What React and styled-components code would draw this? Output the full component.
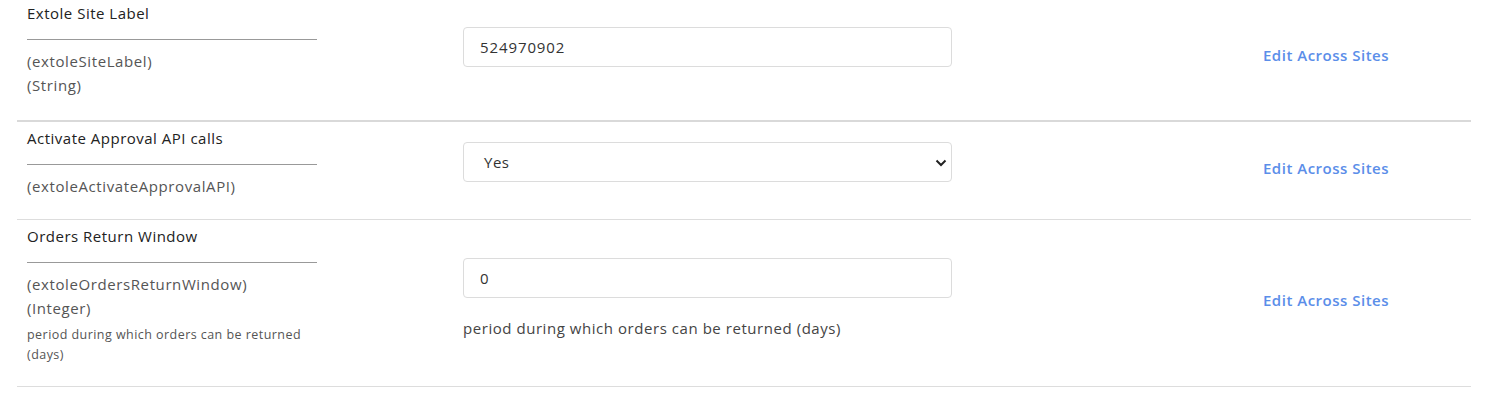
import styled, { createGlobalStyle } from "styled-components"

const GlobalStyle = createGlobalStyle`
  body {
    margin: 0;
    background: #fff;
    font-family: "Open Sans", "Liberation Sans", sans-serif;
    color: #333;
  }
`;

const Table = styled.div`
  margin: -3px 17px 0 17px;
  width: 1454px;
`;

const Row = styled.div`
  display: grid;
  grid-template-columns: 436px 488px 1fr;
  align-items: center;
  padding: 6px 0 ${(p) => (p.thick ? 23 : 21)}px 10px;
  border-bottom: ${(p) => (p.thick ? "2px solid #d9d9d9" : "1px solid #dddddd")};
`;

const LabelCell = styled.div`
  display: flex;
  flex-direction: column;
`;

const Title = styled.div`
  width: 290px;
  font-size: 15px;
  letter-spacing: 0.5px;
  line-height: 20px;
  color: #222;
  padding-bottom: 16px;
  border-bottom: 1px solid #999;
  margin-bottom: 9px;
`;

const Meta = styled.div`
  font-size: 15px;
  letter-spacing: 0.6px;
  line-height: 24px;
  color: #555;
`;

const Note = styled.div`
  width: 290px;
  font-size: 12.5px;
  letter-spacing: 0.45px;
  line-height: 20px;
  color: #555;
  margin-top: 5px;
`;

const FieldCell = styled.div`
  display: flex;
  flex-direction: column;
  margin-top: ${(p) => p.shift || 0}px;
`;

const TextInput = styled.input`
  box-sizing: border-box;
  width: 489px;
  height: 40px;
  padding: 0 16px;
  border: 1px solid #dcdcdc;
  border-radius: 4px;
  font-family: "Open Sans", "Liberation Sans", sans-serif;
  font-size: 15px;
  letter-spacing: 0.9px;
  color: #333;
  outline: none;
`;

const SelectBox = styled.div`
  position: relative;
  box-sizing: border-box;
  width: 489px;
  height: 40px;
  border: 1px solid #dcdcdc;
  border-radius: 4px;
  display: flex;
  align-items: center;
  padding: 0 20px;
  font-size: 15px;
  letter-spacing: 0.5px;
  color: #333;
`;

const Chevron = styled.svg`
  position: absolute;
  right: 4px;
  top: 15px;
`;

const Help = styled.div`
  margin-top: 20px;
  font-size: 15px;
  letter-spacing: 0.55px;
  line-height: 20px;
  color: #444;
`;

const ActionCell = styled.div`
  padding: 9px 0 0 312px;
`;

const EditLink = styled.a`
  font-size: 15px;
  font-weight: 600;
  letter-spacing: 0.5px;
  color: #5b8ee9;
  text-decoration: none;
  cursor: pointer;
`;

const App = () => {
  return (
    <>
      <GlobalStyle />
      <Table>
        <Row thick>
          <LabelCell>
            <Title>Extole Site Label</Title>
            <Meta>(extoleSiteLabel)</Meta>
            <Meta>(String)</Meta>
          </LabelCell>
          <FieldCell shift={-7}>
            <TextInput defaultValue="524970902" />
          </FieldCell>
          <ActionCell>
            <EditLink>Edit Across Sites</EditLink>
          </ActionCell>
        </Row>
        <Row>
          <LabelCell>
            <Title>Activate Approval API calls</Title>
            <Meta>(extoleActivateApprovalAPI)</Meta>
          </LabelCell>
          <FieldCell shift={-3}>
            <SelectBox>
              Yes
              <Chevron width="12" height="10" viewBox="0 0 12 10">
                <path d="M1.5 2.5 L6 7 L10.5 2.5" fill="none" stroke="#222" strokeWidth="2" />
              </Chevron>
            </SelectBox>
          </FieldCell>
          <ActionCell>
            <EditLink>Edit Across Sites</EditLink>
          </ActionCell>
        </Row>
        <Row>
          <LabelCell>
            <Title>Orders Return Window</Title>
            <Meta>(extoleOrdersReturnWindow)</Meta>
            <Meta>(Integer)</Meta>
            <Note>period during which orders can be returned (days)</Note>
          </LabelCell>
          <FieldCell shift={5}>
            <TextInput defaultValue="0" />
            <Help>period during which orders can be returned (days)</Help>
          </FieldCell>
          <ActionCell>
            <EditLink>Edit Across Sites</EditLink>
          </ActionCell>
        </Row>
      </Table>
    </>
  )
}

export default App
